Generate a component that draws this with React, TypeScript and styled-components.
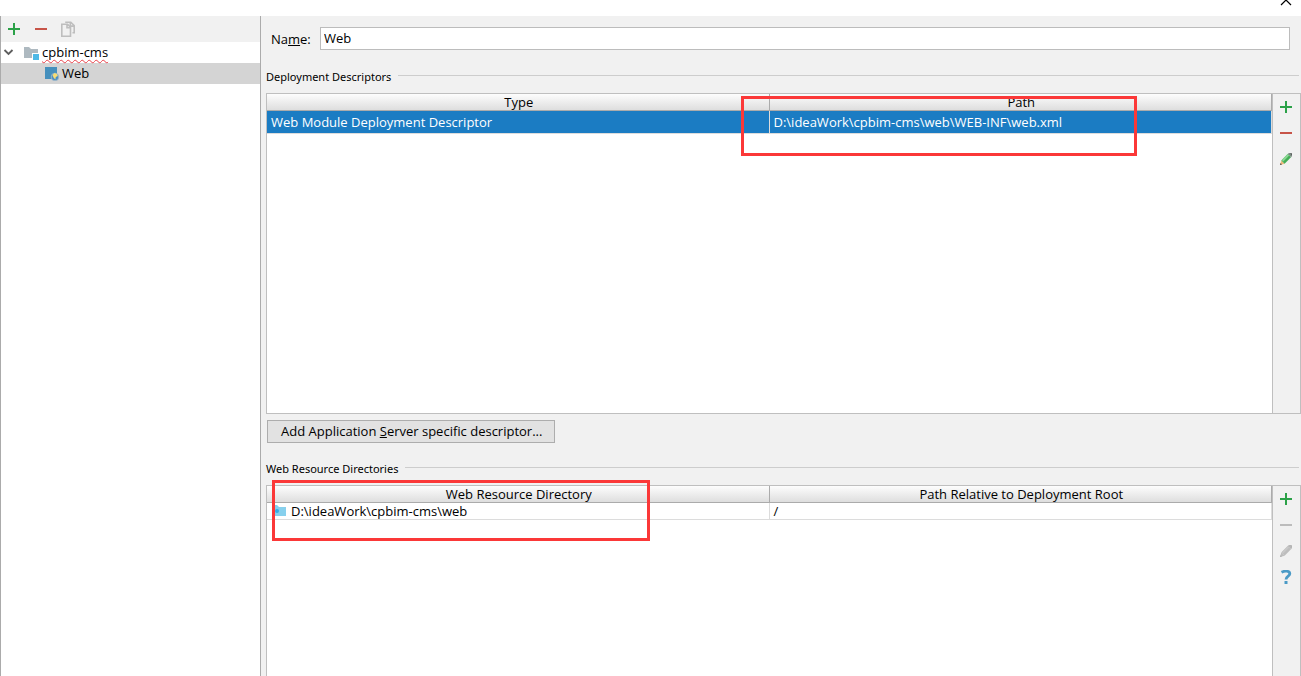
import React from "react";
import styled, { createGlobalStyle, css } from "styled-components";

const GlobalStyle = createGlobalStyle`
  * { box-sizing: border-box; }
  body {
    margin: 0;
    background: #fff;
    color: #000;
    font: 13px/16px "Open Sans", "Noto Sans", sans-serif;
  }
  button, input { font: inherit; color: inherit; }
`;

const Page = styled.div`
  display: flex;
  flex-direction: column;
  height: 100vh;
  min-height: 600px;
  overflow: hidden;
`;

const TitleBar = styled.header`
  display: flex;
  flex: none;
  align-items: flex-start;
  justify-content: flex-end;
  height: 16px;
  padding-right: 9px;
`;

const IconButton = styled.button`
  display: block;
  padding: 0;
  border: 0;
  background: none;
  line-height: 0;
`;

const Body = styled.main`
  display: flex;
  flex: 1;
  min-height: 0;
`;

const Sidebar = styled.aside`
  flex: none;
  width: 261px;
  border: solid #ababab;
  border-width: 0 1px;
`;

const Toolbar = styled.div`
  display: flex;
  align-items: center;
  gap: 13px;
  height: 26px;
  padding-left: 6px;
  background: #f1f1f1;
`;

const Tree = styled.ul`
  margin: 0;
  padding: 0;
  list-style: none;
`;

const TreeRow = styled.li<{ $depth: number; $selected?: boolean }>`
  display: flex;
  align-items: center;
  gap: 2px;
  height: 21px;
  padding: 0 0 1px ${(p) => (p.$depth ? 43 : 2)}px;
  background: ${(p) => (p.$selected ? "#d4d4d4" : "transparent")};
`;

const Misspelled = styled.span`
  text-decoration: underline wavy #e8414a 1px;
  text-decoration-skip-ink: none;
  text-underline-offset: 2px;
`;

const Chevron = styled.span`
  display: flex;
  width: 18px;
`;

const Content = styled.section`
  display: flex;
  flex: 1;
  flex-direction: column;
  min-width: 0;
  padding: 11px 0 0 5px;
  background: #f1f1f1;
`;

const NameRow = styled.div`
  display: flex;
  flex: none;
  align-items: center;
  margin-bottom: 1px;
  padding: 0 11px 0 5px;
`;

const NameLabel = styled.label`
  width: 49px;
`;

const NameInput = styled.input`
  flex: 1;
  min-width: 0;
  height: 23px;
  padding: 0 3px 1px;
  border: 1px solid #bcbcbc;
  background: #fff;
`;

const SectionTitle = styled.h2`
  display: flex;
  flex: none;
  align-items: center;
  gap: 7px;
  margin: 17px 2px 7px 0;
  font: 400 11px/18px "Noto Sans", sans-serif;

  &::after {
    content: "";
    flex: 1;
    height: 1px;
    margin-bottom: 3px;
    background: #cdcdcd;
  }
`;

const Panel = styled.div<{ $fill?: boolean }>`
  position: relative;
  display: flex;
  border: 1px solid #bfbfbf;
  background: #fff;
  ${(p) =>
    p.$fill
      ? css`
          flex: 1;
          border-bottom: 0;
        `
      : css`
          flex: none;
          min-height: 321px;
        `}
`;

const TableArea = styled.div`
  flex: 1;
  min-width: 0;
`;

const Table = styled.table`
  width: 100%;
  table-layout: fixed;
  border-spacing: 0;
`;

const HeadCell = styled.th`
  height: 17px;
  padding: 0 0 0 2px;
  border-right: 1px solid #ababab;
  border-bottom: 1px solid #ababab;
  background: linear-gradient(#fdfdfd, #dedede);
  font-weight: 400;
  line-height: 16px;
`;

const Cell = styled.td<{ $selected?: boolean }>`
  height: ${(p) => (p.$selected ? 23 : 17)}px;
  padding: 0 4px;
  border-right: 1px solid #dcdcdc;
  border-bottom: 1px solid #dcdcdc;
  background: ${(p) => (p.$selected ? "#1b7cc3" : "#fff")};
  color: ${(p) => (p.$selected ? "#fff" : "#000")};
  line-height: 16px;
  white-space: nowrap;
`;

const WithIcon = styled.span`
  display: flex;
  align-items: center;
  gap: 4px;
`;

const SideTools = styled.div`
  display: flex;
  flex: none;
  flex-direction: column;
  align-items: flex-start;
  gap: 12px;
  width: 28px;
  padding: 6px 0 0 6px;
  border-left: 1px solid #bfbfbf;
  background: #f1f1f1;
`;

const AddButton = styled.button`
  flex: none;
  align-self: flex-start;
  height: 23px;
  margin: 6px 0 0 1px;
  padding: 0 12px 1px 13px;
  border: 1px solid #adadad;
  background: #e2e2e2;
  line-height: 20px;
`;

const Highlight = styled.div<{ $second?: boolean }>`
  position: absolute;
  top: ${(p) => (p.$second ? -6 : 2)}px;
  left: ${(p) => (p.$second ? "5px" : "calc(50% - 43px)")};
  width: ${(p) => (p.$second ? 378 : 396)}px;
  height: ${(p) => (p.$second ? 61 : 60)}px;
  border: 3px solid #fb3838;
  pointer-events: none;
`;

const Plus = () => (
  <svg width="14" height="14" viewBox="0 0 14 14">
    <path d="M6 1h2v5h5v2H8v5H6V8H1V6h5z" fill="#2ba148" />
  </svg>
);

const Minus = ({ color = "#c75448" }: { color?: string }) => (
  <svg width="14" height="14" viewBox="0 0 14 14">
    <path d="M1 6h12v2H1z" fill={color} />
  </svg>
);

const Copy = () => (
  <svg width="16" height="16" viewBox="0 0 16 16" fill="none" stroke="#bebebe" strokeWidth="1.600">
    <path d="M4.200 1.200h5.600l3.400 3.400v7.200h-1.700M9.300 1.200v3.900h3.900" />
    <path d="M.8 3.200h5.700l3 3v9H.8zM6 3.200v3.500h3.500" />
  </svg>
);

const Pencil = ({ off }: { off?: boolean }) => (
  <svg width="14" height="14" viewBox="0 0 14 14">
    <path d="M1 13l1.300-4.600 3.300 3.300z" fill={off ? "#bdbdbd" : "#efba7c"} />
    <path d="M2.300 8.400l6.400-6.400 3.300 3.300-6.400 6.400z" fill={off ? "#bdbdbd" : "#43ad55"} />
    <path d="M2.800 7.900l6.400-6.400 1.500 1.500-6.400 6.400z" fill={off ? "#c8c8c8" : "#8ad894"} />
    <path d="M8.800 1.900L10 1h2l1 1v2l-.9 1.200z" fill={off ? "#b8b8b8" : "#7b8a82"} />
    <path d="M11.500 1h.6l.9.900v1.600z" fill={off ? "#b0b0b0" : "#444"} />
    <path d="M1 13l.6-2L3 12.400z" fill={off ? "#b0b0b0" : "#444"} />
  </svg>
);

const Help = () => (
  <svg width="14" height="14" viewBox="0 0 14 14">
    <path
      d="M2.500 2.300C6 .4 10.800.8 10.800 3.800 10.800 6.300 7 6 7 9.600"
      fill="none"
      stroke="#4a9ac6"
      strokeWidth="2.800"
    />
    <path d="M5.500 11h3v3h-3z" fill="#4a9ac6" />
  </svg>
);

const ModuleFolder = () => (
  <svg width="17" height="16" viewBox="0 0 17 16">
    <path d="M1 3h5l2 2h7v4h-6v5H1z" fill="#aeb9c0" />
    <path d="M10 10h6v6h-6z" fill="#4fb9e6" />
  </svg>
);

const WebFacet = () => (
  <svg width="16" height="16" viewBox="0 0 16 16">
    <path d="M1 2h12v12H1z" fill="#4690bd" />
    <circle cx="11" cy="12" r="3.800" fill="#4d8fc4" stroke="#a9bdca" strokeWidth=".8" />
    <path d="M8.500 10l2-2 2.500 1 .8 2-2 1-.5 2.500-1.800-2z" fill="#f7dd74" />
  </svg>
);

const WebFolder = () => (
  <svg width="16" height="14" viewBox="0 0 16 14">
    <path d="M1 1h5l2 2h7v9H1z" fill="#87d0ed" />
    <circle cx="6" cy="7" r="2" fill="#35ade5" />
  </svg>
);

export default function App() {
  return (
    <>
      <GlobalStyle />
      <Page>
        <TitleBar>
          <IconButton aria-label="Collapse">
            <svg width="12" height="8" viewBox="0 0 12 8" fill="none" stroke="#000" strokeWidth="1.200">
              <path d="M1 5l5-5 5 5" />
            </svg>
          </IconButton>
        </TitleBar>
        <Body>
          <Sidebar>
            <Toolbar>
              <IconButton aria-label="Add facet"><Plus /></IconButton>
              <IconButton aria-label="Remove facet"><Minus /></IconButton>
              <IconButton aria-label="Copy facet"><Copy /></IconButton>
            </Toolbar>
            <Tree>
              <TreeRow $depth={0}>
                <Chevron>
                  <svg width="11" height="8" viewBox="0 0 11 8" fill="none" stroke="#5e5e5e" strokeWidth="1.800">
                    <path d="M1.500 2l4 4 4-4" />
                  </svg>
                </Chevron>
                <ModuleFolder />
                <Misspelled>cpbim-cms</Misspelled>
              </TreeRow>
              <TreeRow $depth={1} $selected>
                <WebFacet />
                <span>Web</span>
              </TreeRow>
            </Tree>
          </Sidebar>
          <Content>
            <NameRow>
              <NameLabel htmlFor="facet-name">Na<u>m</u>e:</NameLabel>
              <NameInput id="facet-name" defaultValue="Web" />
            </NameRow>
            <SectionTitle>Deployment Descriptors</SectionTitle>
            <Panel>
              <TableArea>
                <Table>
                  <thead>
                    <tr><HeadCell>Type</HeadCell><HeadCell>Path</HeadCell></tr>
                  </thead>
                  <tbody>
                    <tr>
                      <Cell $selected>Web Module Deployment Descriptor</Cell>
                      <Cell $selected>D:\ideaWork\cpbim-cms\web\WEB-INF\web.xml</Cell>
                    </tr>
                  </tbody>
                </Table>
              </TableArea>
              <SideTools>
                <IconButton aria-label="Add descriptor"><Plus /></IconButton>
                <IconButton aria-label="Remove descriptor"><Minus /></IconButton>
                <IconButton aria-label="Edit descriptor"><Pencil /></IconButton>
              </SideTools>
              <Highlight />
            </Panel>
            <AddButton>Add Application <u>S</u>erver specific descriptor...</AddButton>
            <SectionTitle>Web Resource Directories</SectionTitle>
            <Panel $fill>
              <TableArea>
                <Table>
                  <thead>
                    <tr>
                      <HeadCell>Web Resource Directory</HeadCell>
                      <HeadCell>Path Relative to Deployment Root</HeadCell>
                    </tr>
                  </thead>
                  <tbody>
                    <tr>
                      <Cell><WithIcon><WebFolder />D:\ideaWork\cpbim-cms\web</WithIcon></Cell>
                      <Cell>/</Cell>
                    </tr>
                  </tbody>
                </Table>
              </TableArea>
              <SideTools>
                <IconButton aria-label="Add directory"><Plus /></IconButton>
                <IconButton aria-label="Remove directory" disabled><Minus color="#bcbcbc" /></IconButton>
                <IconButton aria-label="Edit directory" disabled><Pencil off /></IconButton>
                <IconButton aria-label="Help"><Help /></IconButton>
              </SideTools>
              <Highlight $second />
            </Panel>
          </Content>
        </Body>
      </Page>
    </>
  );
}
